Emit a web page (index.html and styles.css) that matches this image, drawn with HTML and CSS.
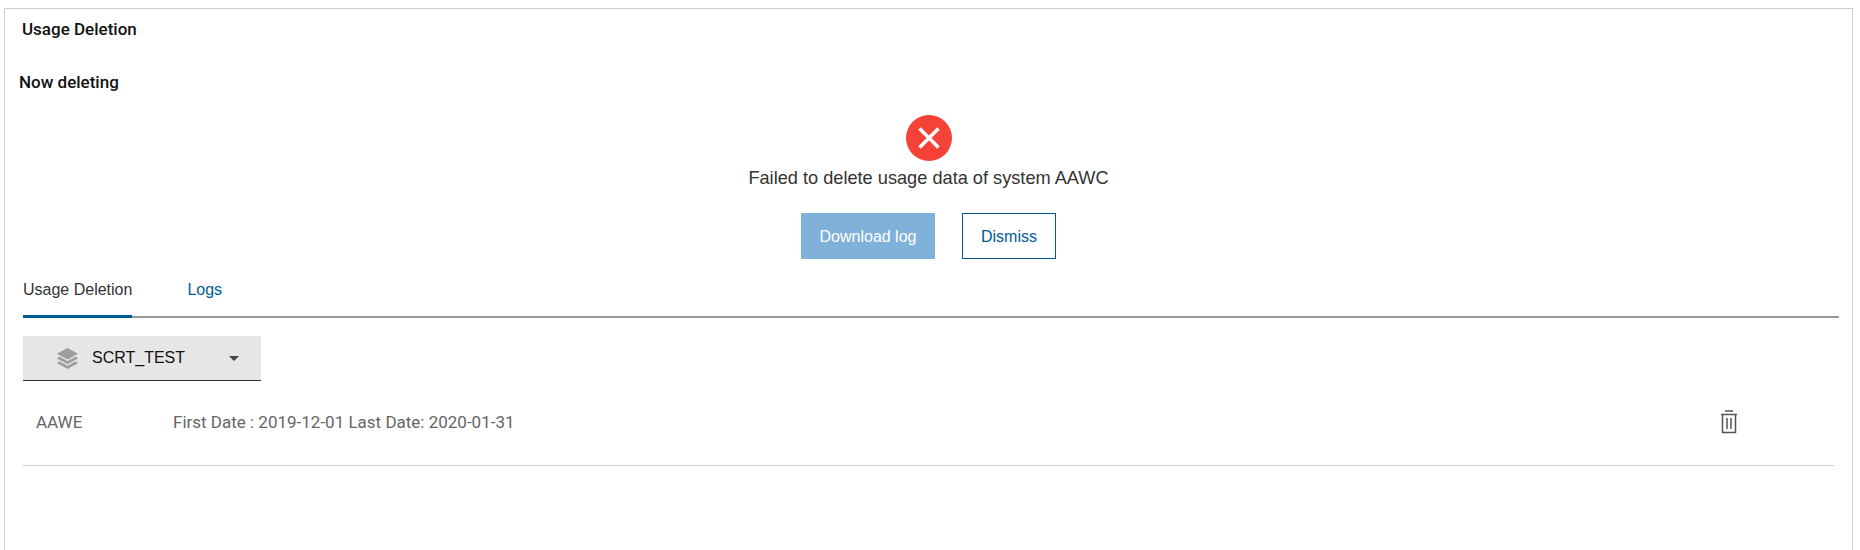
FILE: index.html
```html
<!DOCTYPE html>
<html>

<head>
    <title>Usage Deletion</title>
    <link rel="stylesheet" href="styles.css">
</head>

<body>
    <div class="panel">
        <div class="panel-title">Usage Deletion</div>
        <div class="status-title">Now deleting</div>

        <!-- Failure message -->
        <div class="status">
            <svg class="status-icon" width="46" height="46" viewBox="0 0 46 46">
                <circle cx="23" cy="23" r="23" fill="#f44336"></circle>
                <path d="M13.500 13.500L32.500 32.500M32.500 13.500L13.500 32.500" stroke="#fff" stroke-width="3.500" fill="none"></path>
            </svg>
            <div class="status-text">Failed to delete usage data of system AAWC</div>
            <div class="status-actions">
                <button class="btn btn-disabled">Download log</button>
                <button class="btn btn-outline">Dismiss</button>
            </div>
        </div>

        <!-- Tabs -->
        <div class="tabs">
            <div class="tab tab-active">Usage Deletion</div>
            <div class="tab">Logs</div>
        </div>

        <div class="dropdown">
            <svg class="dropdown-icon" width="21" height="21" viewBox="0 0 20 20">
                <path d="M10 0L20 5.500 10 11 0 5.500z" fill="#9e9e9e"></path>
                <path d="M2 8.200L0 10l10 5.500L20 10l-2-1.800L10 12.400z" fill="#9e9e9e"></path>
                <path d="M2 12.700L0 14.500 10 20l10-5.500-2-1.800L10 16.900z" fill="#9e9e9e"></path>
            </svg>
            <span class="dropdown-label">SCRT_TEST</span>
            <span class="dropdown-arrow"></span>
        </div>

        <!-- Usage rows -->
        <div class="usage-row">
            <div class="usage-name">AAWE</div>
            <div class="usage-dates">First Date : 2019-12-01 Last Date: 2020-01-31</div>
            <svg class="usage-delete" width="18" height="24" viewBox="0 0 18 24">
                <path d="M5 1H13M1 4.500H17" stroke="#555" stroke-width="1.500" fill="none"></path>
                <path d="M2.500 4.500V22.500H15.500V4.500" stroke="#555" stroke-width="1.500" fill="none"></path>
                <path d="M7 8V19M11 8V19" stroke="#555" stroke-width="1.500" fill="none"></path>
            </svg>
        </div>
    </div>
</body>

</html>
```

FILE: styles.css
```css
html,
body {
    height: 100%;
}

body {
    margin: 0;
    padding: 8px 7px 0 4px;
    box-sizing: border-box;
    overflow: hidden;
    background-color: #fff;
    font-family: Roboto, sans-serif;
}

.panel {
    height: 100%;
    box-sizing: border-box;
    border: 1px solid #ccc;
    border-bottom: 0;
    padding-left: 18px;
    padding-right: 13px;
}

.panel-title {
    margin-top: 10px;
    margin-left: -1px;
    line-height: 20px;
    font-size: 17px;
    font-weight: 500;
    color: #111;
}

.status-title {
    margin-top: 33px;
    margin-left: -4px;
    line-height: 20px;
    font-size: 17px;
    font-weight: 500;
    color: #111;
}

.status {
    display: flex;
    flex-direction: column;
    align-items: center;
    margin-top: 23px;
    padding-right: 5px;
    font-family: "Liberation Sans", sans-serif;
}

.status-icon {
    display: block;
}

.status-text {
    margin-top: 5px;
    line-height: 24px;
    font-size: 18.2px;
    color: #333;
}

.status-actions {
    display: flex;
    gap: 27px;
    margin-top: 23px;
}

.btn {
    height: 46px;
    box-sizing: border-box;
    border: 1px solid #005a96;
    border-radius: 0;
    padding-top: 2px;
    font-family: "Liberation Sans", sans-serif;
    font-size: 16px;
}

.btn-disabled {
    width: 134px;
    border-color: #7fb1d9;
    background-color: #7fb1d9;
    color: #fff;
}

.btn-outline {
    width: 94px;
    background-color: #fff;
    color: #005a96;
}

.tabs {
    display: flex;
    gap: 55px;
    margin-top: 16px;
    border-bottom: 2px solid #999;
    font-family: "Liberation Sans", sans-serif;
    font-size: 16px;
}

.tab {
    height: 40px;
    line-height: 30px;
    margin-bottom: -2px;
    color: #005a96;
}

.tab-active {
    border-bottom: 3px solid #005a96;
    color: #333;
}

.dropdown {
    display: flex;
    align-items: center;
    width: 238px;
    height: 45px;
    box-sizing: border-box;
    margin-top: 18px;
    padding-left: 34px;
    border-bottom: 1px solid #333;
    background-color: #e6e6e6;
    font-family: "Liberation Sans", sans-serif;
    font-size: 16px;
    color: #111;
}

.dropdown-label {
    margin-left: 14px;
    width: 137px;
}

.dropdown-arrow {
    width: 0;
    height: 0;
    border-left: 5px solid transparent;
    border-right: 5px solid transparent;
    border-top: 5px solid #444;
}

.usage-row {
    display: flex;
    align-items: center;
    height: 81px;
    padding-bottom: 3px;
    border-bottom: 1px solid #ccc;
    font-size: 17px;
    color: #666;
    margin-right: 5px;
}

.usage-name {
    width: 137px;
    padding-left: 13px;
    box-sizing: border-box;
}

.usage-dates {
    flex: 1;
    margin-left: 13px;
}

.usage-delete {
    margin-right: 96px;
}
```
